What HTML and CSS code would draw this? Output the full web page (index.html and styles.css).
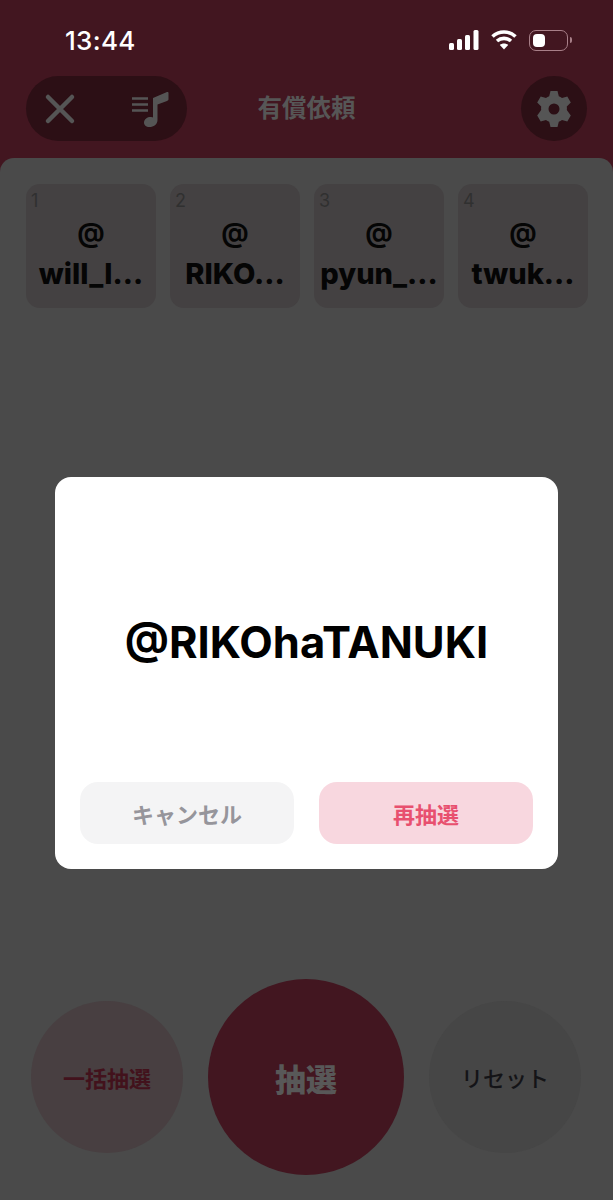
FILE: index.html
```html
<!DOCTYPE html>
<html lang="ja">

<head>
  <meta charset="UTF-8">
  <meta name="viewport" content="width=device-width, initial-scale=1.0">
  <title>有償依頼</title>
  <link rel="stylesheet" href="styles.css">
</head>

<body>
  <div class="screen">
    <div class="status-bar">
      <span class="clock">13:44</span>
      <div class="status-icons">
        <svg class="signal" width="30" height="20" viewBox="0 0 30 20">
          <rect x="0" y="13" width="5" height="7" rx="1.5" />
          <rect x="8" y="9" width="5" height="11" rx="1.5" />
          <rect x="16" y="5" width="5" height="15" rx="1.5" />
          <rect x="24.500" y="0" width="5" height="20" rx="1.500" />
        </svg>
        <svg class="wifi" width="26" height="20" viewBox="0 0 26 20">
          <path d="M1.500 6.500 C8 0.500 18 0.500 24.500 6.500" />
          <path d="M6 11 C10 7.500 16 7.500 20 11" />
          <path class="wifi-dot" d="M13 19.500 L8.800 15 C11 13 15 13 17.200 15 Z" />
        </svg>
        <div class="battery">
          <div class="battery-level"></div>
        </div>
        <div class="battery-cap"></div>
      </div>
    </div>

    <header class="app-bar">
      <div class="pill">
        <svg width="32" height="32" viewBox="0 0 32 32">
          <path class="icon-stroke" d="M4 4 L28 28 M28 4 L4 28" />
        </svg>
        <svg width="38" height="38" viewBox="0 0 38 38">
          <path class="icon-thin" d="M1 8.500 H17 M1 14.500 H17 M1 20.500 H17" />
          <path class="icon-fill" d="M22 8 L36 2 C37 1.700 37.500 2.200 37.500 3 V9 C37.500 10 37 10.500 36 11 L26.500 14.500 V30 C26.500 34.500 22.500 37 18.500 37 C15 37 13 35 13 32.500 C13 29 16.500 27 19.500 27 C20.800 27 21.500 27.200 22 27.500 Z" />
        </svg>
      </div>
      <h1 class="page-title">有償依頼</h1>
      <div class="round-btn">
        <svg width="38" height="38" viewBox="0 0 38 38">
          <path class="icon-fill" fill-rule="evenodd" d="M15.500 1 H22.500 L23.800 6.300 C25 6.800 26 7.400 27 8.100 L32.300 6.600 L35.800 12.600 L31.800 16.400 C32 17.600 32 18.800 31.800 20 L35.800 25.400 L32.300 31.400 L27 29.900 C26 30.600 25 31.200 23.800 31.700 L22.500 37 H15.500 L14.200 31.700 C13 31.200 12 30.600 11 29.900 L5.700 31.400 L2.200 25.400 L6.200 20 C6 18.800 6 17.600 6.200 16.400 L2.200 12.600 L5.700 6.600 L11 8.100 C12 7.400 13 6.800 14.200 6.300 Z M19 13.500 A5.500 5.500 0 1 0 19 24.500 A5.500 5.500 0 1 0 19 13.500 Z" />
        </svg>
      </div>
    </header>

    <main class="sheet">
      <div class="winners">
        <div class="winner">
          <span class="winner-no">1</span>
          <span class="winner-at">@</span>
          <span class="winner-name">will_l...</span>
        </div>
        <div class="winner">
          <span class="winner-no">2</span>
          <span class="winner-at">@</span>
          <span class="winner-name">RIKO...</span>
        </div>
        <div class="winner">
          <span class="winner-no">3</span>
          <span class="winner-at">@</span>
          <span class="winner-name">pyun_...</span>
        </div>
        <div class="winner">
          <span class="winner-no">4</span>
          <span class="winner-at">@</span>
          <span class="winner-name">twuk...</span>
        </div>
      </div>

      <div class="draw-actions">
        <button class="circle circle-all">一括抽選</button>
        <button class="circle circle-draw">抽選</button>
        <button class="circle circle-reset">リセット</button>
      </div>
    </main>

    <div class="modal">
      <div class="modal-name">@RIKOhaTANUKI</div>
      <div class="modal-actions">
        <button class="modal-btn btn-cancel">キャンセル</button>
        <button class="modal-btn btn-redraw">再抽選</button>
      </div>
    </div>
  </div>
</body>

</html>
```

FILE: styles.css
```css
:root {
  --maroon: #421620;
  --maroon-dark: #2c0f15;
  --sheet: #4a4a4a;
  --icon: #555555;
  --jp: "Noto Sans CJK JP", sans-serif;
}

* {
  margin: 0;
  padding: 0;
  box-sizing: border-box;
}

body {
  background: var(--maroon);
  font-family: "Inter", "Noto Sans CJK JP", sans-serif;
}

.screen {
  position: relative;
  display: flex;
  flex-direction: column;
  height: 1200px;
  overflow: hidden;
}

/* status bar */
.status-bar {
  display: flex;
  justify-content: space-between;
  align-items: center;
  height: 76px;
  padding: 4px 41px 0 65px;
  flex-shrink: 0;
}

.clock {
  color: #fff;
  font-size: 26px;
  font-weight: 500;
  letter-spacing: 0.3px;
}

.status-icons {
  display: flex;
  align-items: center;
}

.signal {
  fill: #fff;
  margin-right: 12px;
}

.wifi {
  margin-right: 12px;
  fill: none;
  stroke: #fff;
  stroke-width: 3.6;
}

.wifi-dot {
  fill: #fff;
  stroke: none;
}

.battery {
  width: 39px;
  height: 21px;
  padding: 3px;
  border: 1.5px solid #a87f88;
  border-radius: 7px;
}

.battery-level {
  width: 12px;
  height: 100%;
  background: #fff;
  border-radius: 4px;
}

.battery-cap {
  width: 2px;
  height: 6px;
  margin-left: 2px;
  background: #a87f88;
  border-radius: 0 2px 2px 0;
}

/* app bar */
.app-bar {
  display: grid;
  grid-template-columns: 1fr auto 1fr;
  align-items: center;
  height: 65px;
  padding: 0 26px;
  flex-shrink: 0;
}

.pill {
  display: flex;
  align-items: center;
  justify-content: space-between;
  width: 161px;
  height: 65px;
  padding: 0 18px 0 18px;
  background: var(--maroon-dark);
  border-radius: 33px;
}

.round-btn {
  display: flex;
  align-items: center;
  justify-content: center;
  justify-self: end;
  width: 66px;
  height: 65px;
  background: var(--maroon-dark);
  border-radius: 50%;
}

.icon-stroke {
  fill: none;
  stroke: var(--icon);
  stroke-width: 4.500;
  stroke-linecap: round;
}

.icon-thin {
  fill: none;
  stroke: var(--icon);
  stroke-width: 2.500;
}

.icon-fill {
  fill: var(--icon);
}

.page-title {
  color: #565656;
  font-family: var(--jp);
  font-size: 24.500px;
  font-weight: 700;
  line-height: 1;
  margin-top: -3px;
}

/* lottery sheet */
.sheet {
  display: flex;
  flex-direction: column;
  justify-content: space-between;
  flex: 1;
  margin-top: 17px;
  padding: 26px 25px 25px 26px;
  background: var(--sheet);
  border-radius: 14px 14px 0 0;
}

.winners {
  display: grid;
  grid-template-columns: repeat(4, 130px);
  gap: 14px;
}

.winner {
  position: relative;
  display: flex;
  flex-direction: column;
  align-items: center;
  height: 124px;
  padding-top: 28px;
  background: #444142;
  border-radius: 14px;
}

.winner-no {
  position: absolute;
  top: 6px;
  left: 5px;
  color: #303030;
  font-size: 18px;
  font-weight: 400;
}

.winner-at,
.winner-name {
  color: #050505;
  font-size: 27px;
  font-weight: 700;
  line-height: 41px;
  white-space: nowrap;
}

.winner-name {
  font-size: 29px;
  font-weight: 800;
}

.draw-actions {
  display: flex;
  align-items: center;
  justify-content: space-between;
  padding: 0 7px 0 5px;
}

.circle {
  display: flex;
  align-items: center;
  justify-content: center;
  border: none;
  border-radius: 50%;
  font-family: var(--jp);
}

.circle-all {
  width: 152px;
  height: 152px;
  background: #483f41;
  color: #42121c;
  font-size: 22px;
  font-weight: 700;
}

.circle-draw {
  width: 196px;
  height: 196px;
  background: var(--maroon);
  color: #585858;
  font-size: 31px;
  font-weight: 900;
}

.circle-reset {
  width: 152px;
  height: 152px;
  background: #464646;
  color: #141417;
  font-size: 22px;
  font-weight: 500;
}

/* result dialog */
.modal {
  position: absolute;
  top: 477px;
  left: 55px;
  display: flex;
  flex-direction: column;
  width: 503px;
  height: 392px;
  padding: 0 25px 25px;
  background: #fff;
  border-radius: 16px;
}

.modal-name {
  display: flex;
  align-items: center;
  justify-content: center;
  flex: 1;
  padding-top: 24px;
  color: #000;
  font-size: 43.500px;
  font-weight: 700;
  white-space: nowrap;
}

.modal-actions {
  display: flex;
  justify-content: space-between;
}

.modal-btn {
  width: 214px;
  height: 62px;
  border: none;
  border-radius: 18px;
  font-family: var(--jp);
  font-size: 22px;
  font-weight: 700;
}

.btn-cancel {
  background: #f4f4f5;
  color: #96959b;
}

.btn-redraw {
  background: #f8d7df;
  color: #e8506f;
}
```
